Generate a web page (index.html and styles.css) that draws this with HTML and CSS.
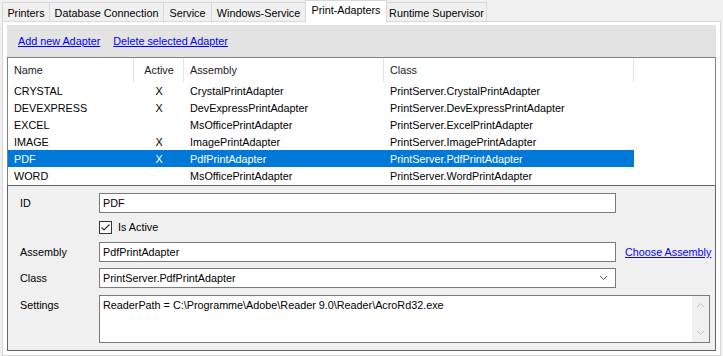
FILE: index.html
```html
<!DOCTYPE html>
<html>
<head>
<meta charset="utf-8">
<link rel="stylesheet" href="styles.css">
</head>
<body>
<div class="tabs">
  <div class="tab w1">Printers</div>
  <div class="tab w2">Database Connection</div>
  <div class="tab w3">Service</div>
  <div class="tab w4">Windows-Service</div>
  <div class="tab w5 active">Print-Adapters</div>
  <div class="tab w6">Runtime Supervisor</div>
</div>
<div class="page">
  <div class="toolbar">
    <a class="link">Add new Adapter</a>
    <a class="link">Delete selected Adapter</a>
  </div>
  <div class="list">
    <div class="row head">
      <div class="c c1">Name</div>
      <div class="c c2">Active</div>
      <div class="c c3">Assembly</div>
      <div class="c c4">Class</div>
    </div>
    <div class="row">
      <div class="c c1">CRYSTAL</div><div class="c c2">X</div><div class="c c3">CrystalPrintAdapter</div><div class="c c4">PrintServer.CrystalPrintAdapter</div>
    </div>
    <div class="row">
      <div class="c c1">DEVEXPRESS</div><div class="c c2">X</div><div class="c c3">DevExpressPrintAdapter</div><div class="c c4">PrintServer.DevExpressPrintAdapter</div>
    </div>
    <div class="row">
      <div class="c c1">EXCEL</div><div class="c c2"></div><div class="c c3">MsOfficePrintAdapter</div><div class="c c4">PrintServer.ExcelPrintAdapter</div>
    </div>
    <div class="row">
      <div class="c c1">IMAGE</div><div class="c c2">X</div><div class="c c3">ImagePrintAdapter</div><div class="c c4">PrintServer.ImagePrintAdapter</div>
    </div>
    <div class="row sel">
      <div class="c c1">PDF</div><div class="c c2">X</div><div class="c c3">PdfPrintAdapter</div><div class="c c4">PrintServer.PdfPrintAdapter</div>
    </div>
    <div class="row">
      <div class="c c1">WORD</div><div class="c c2"></div><div class="c c3">MsOfficePrintAdapter</div><div class="c c4">PrintServer.WordPrintAdapter</div>
    </div>
  </div>
  <div class="form">
    <div class="frow r1">
      <div class="label">ID</div>
      <div class="input">PDF</div>
    </div>
    <div class="frow r2">
      <div class="label"></div>
      <div class="check">
        <span class="box"><svg width="11" height="11" viewBox="0 0 11 11"><path d="M1.5 5.5 L4 8 L9.5 2.5" fill="none" stroke="#333" stroke-width="1.2"/></svg></span>
        <span>Is Active</span>
      </div>
    </div>
    <div class="frow r3">
      <div class="label">Assembly</div>
      <div class="input">PdfPrintAdapter</div>
      <a class="link choose">Choose Assembly</a>
    </div>
    <div class="frow r4">
      <div class="label">Class</div>
      <div class="input combo"><span>PrintServer.PdfPrintAdapter</span>
        <svg class="arrow" width="9" height="6" viewBox="0 0 9 6"><path d="M1 1 L4.5 4.5 L8 1" fill="none" stroke="#555" stroke-width="1"/></svg>
      </div>
    </div>
    <div class="frow r5">
      <div class="label top">Settings</div>
      <div class="memo">
        <div class="memotext">ReaderPath = C:\Programme\Adobe\Reader 9.0\Reader\AcroRd32.exe</div>
        <div class="sbar">
          <svg width="9" height="6" viewBox="0 0 9 6"><path d="M1 5 L4.5 1.5 L8 5" fill="none" stroke="#c2c2c2" stroke-width="1"/></svg>
          <svg width="9" height="6" viewBox="0 0 9 6"><path d="M1 1 L4.5 4.5 L8 1" fill="none" stroke="#c2c2c2" stroke-width="1"/></svg>
        </div>
      </div>
    </div>
  </div>
</div>
</body>
</html>
```
FILE: styles.css
```css
* { box-sizing: border-box; }
html, body {
  margin: 0;
  padding: 0;
  background: #f0f0f0;
  font-family: "Liberation Sans", Arial, sans-serif;
  font-size: 10.8px;
  color: #000;
  width: 723px;
  height: 356px;
  overflow: hidden;
}
.tabs {
  display: flex;
  align-items: flex-end;
  height: 21px;
  padding-left: 2px;
}
.tab {
  height: 19px;
  border: 1px solid #d9d9d9;
  border-bottom: none;
  margin-right: -1px;
  background: #f0f0f0;
  display: flex;
  align-items: center;
  justify-content: center;
  padding-top: 1px;
  white-space: nowrap;
}
.w1 { width: 48px; }
.w2 { width: 115px; }
.w3 { width: 49px; }
.w4 { width: 95px; }
.w5 { width: 82px; }
.w6 { width: 101px; }
.tab.active {
  height: 22px;
  margin-bottom: -1px;
  background: #fff;
  position: relative;
  z-index: 1;
  padding-top: 0;
  padding-bottom: 3px;
}
.page {
  margin: 0 2px 0 2px;
  height: 335px;
  border: 1px solid #d9d9d9;
  background: #fff;
  padding: 3px 4px 4px 4px;
  display: flex;
  flex-direction: column;
}
.toolbar {
  height: 32px;
  background: #e3e3e3;
  display: flex;
  align-items: center;
  gap: 13px;
  padding-left: 11px;
  padding-bottom: 1px;
}
.link {
  color: #0000ff;
  text-decoration: underline;
}
.list {
  height: 128px;
  border: 1px solid #828282;
  border-bottom: none;
  background: #fff;
}
.row {
  display: flex;
  height: 17px;
  align-items: center;
}
.row.head {
  height: 24px;
  color: #1a1a1a;
}
.c {
  padding-left: 6px;
  white-space: nowrap;
  height: 100%;
  display: flex;
  align-items: center;
}
.c1 { width: 126px; }
.c2 { width: 50px; justify-content: center; padding-left: 0; }
.c3 { width: 200px; }
.c4 { width: 250px; }
.head .c { border-right: 1px solid #e5e5e5; }
.head .c2 { padding-left: 1px; }
.row.sel .c { background: #0078d7; color: #fff; }
.form {
  flex: 1;
  background: #f0f0f0;
  border: 1px solid #646464;
  padding: 7px 0 0 12px;
  display: flex;
  flex-direction: column;
}
.frow {
  display: flex;
  align-items: center;
}
.label { width: 79px; }
.label.top { align-self: flex-start; padding-top: 4px; }
.input {
  width: 517px;
  height: 20px;
  background: #fff;
  border: 1px solid #7a7a7a;
  padding-left: 3px;
  display: flex;
  align-items: center;
}
.r1 { height: 20px; }
.r2 { height: 14px; margin-top: 7px; }
.r3 { height: 20px; margin-top: 8px; }
.r4 { height: 20px; margin-top: 6px; }
.r5 { height: 48px; margin-top: 7px; align-items: stretch; }
.check { display: flex; align-items: center; gap: 6px; }
.box {
  width: 13px;
  height: 13px;
  border: 1px solid #333;
  background: #fff;
  display: flex;
  align-items: center;
  justify-content: center;
}
.choose { margin-left: 9px; }
.combo { justify-content: space-between; padding-right: 7px; }
.memo {
  width: 611px;
  height: 48px;
  background: #fff;
  border: 1px solid #7a7a7a;
  display: flex;
}
.memotext { flex: 1; padding: 3px 0 0 3px; }
.sbar {
  width: 17px;
  background: #f0f0f0;
  display: flex;
  flex-direction: column;
  justify-content: space-between;
  align-items: center;
  padding: 6px 0 6px 0;
}
```
